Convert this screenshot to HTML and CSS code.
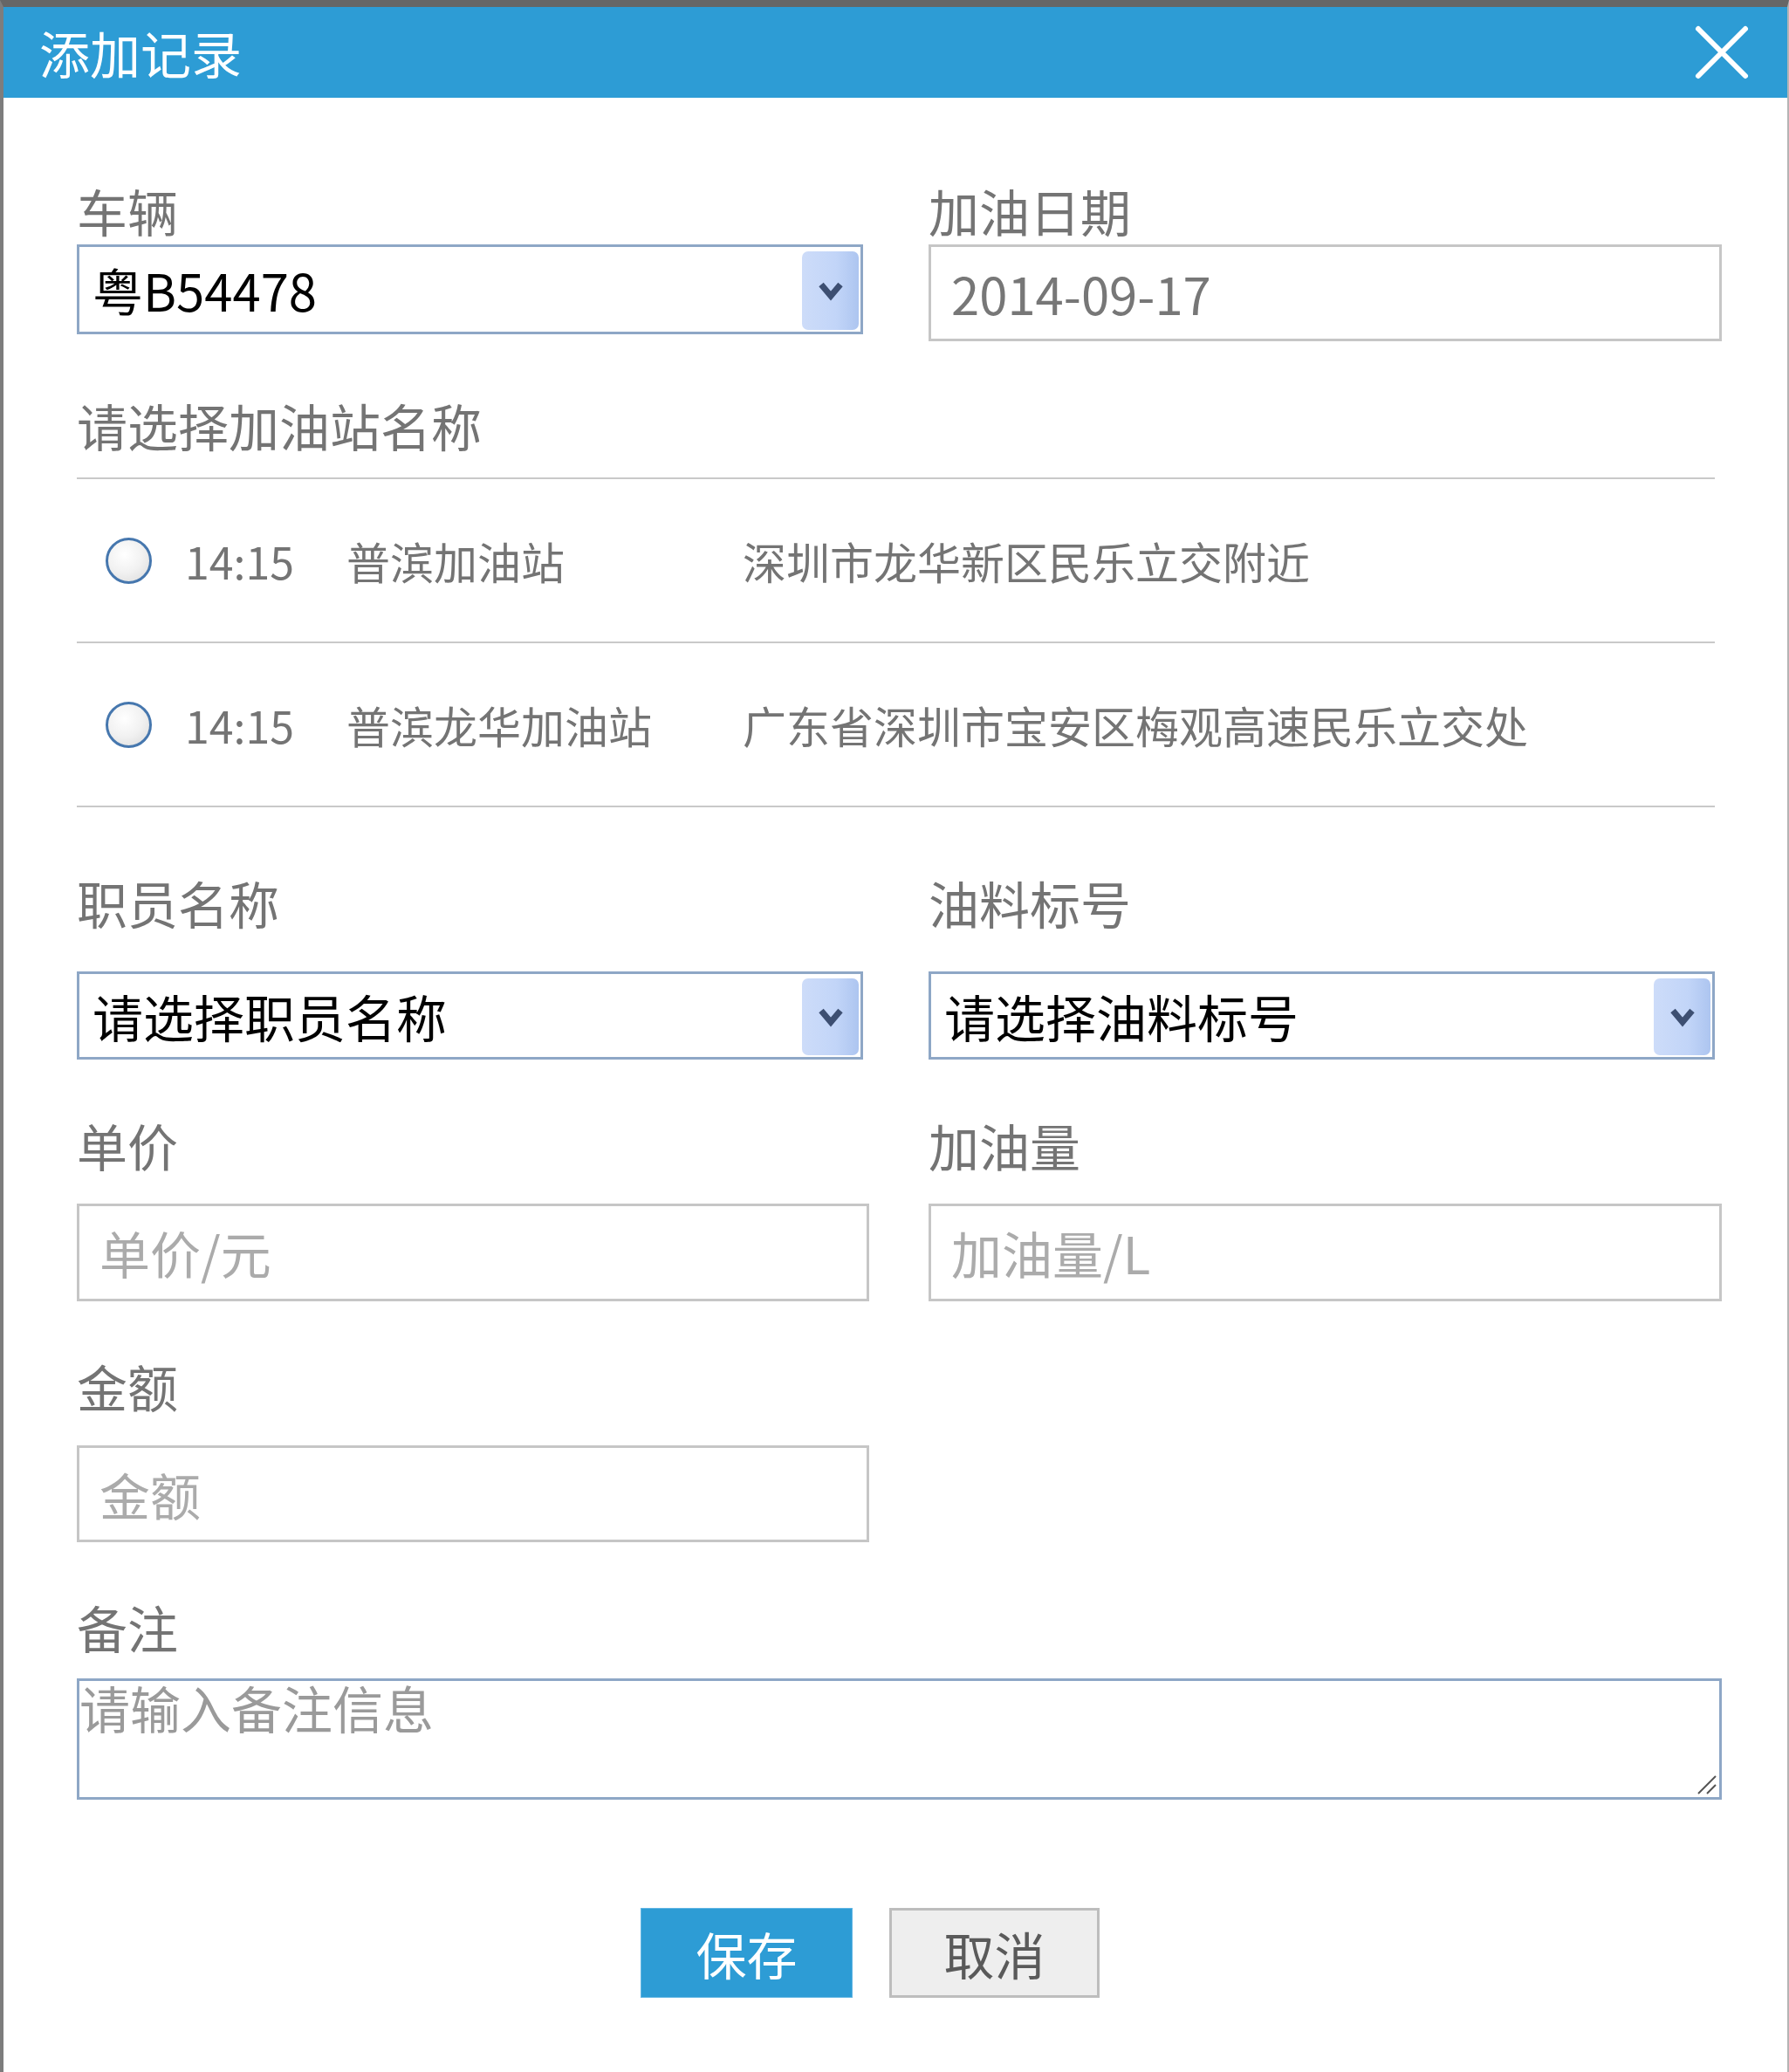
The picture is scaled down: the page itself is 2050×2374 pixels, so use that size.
FILE: index.html
```html
<!DOCTYPE html>
<html lang="zh-CN">
<head>
<meta charset="utf-8">
<title>添加记录</title>
<link rel="stylesheet" href="styles.css">
</head>
<body>
<div class="dialog">
  <div class="header">
    <div class="title">添加记录</div>
    <svg class="close" width="66" height="66" viewBox="0 0 66 66"><path d="M6 6 L60 60 M60 6 L6 60" stroke="#fff" stroke-width="6" stroke-linecap="round" fill="none"/></svg>
  </div>
  <div class="body">
    <div class="grid first">
      <div class="field">
        <div class="label">车辆</div>
        <div class="select">
          <span class="sel-text">粤B54478</span>
          <span class="drop"><svg width="32" height="26" viewBox="0 0 32 26"><path d="M5 6 L16 19 L27 6" stroke="#3d4f72" stroke-width="7" fill="none"/></svg></span>
        </div>
      </div>
      <div class="field">
        <div class="label">加油日期</div>
        <input class="input date" type="text" value="2014-09-17">
      </div>
    </div>

    <div class="label section">请选择加油站名称</div>
    <div class="stations">
      <div class="station">
        <span class="radio"></span>
        <span class="time">14:15</span>
        <span class="name">普滨加油站</span>
        <span class="addr">深圳市龙华新区民乐立交附近</span>
      </div>
      <div class="station">
        <span class="radio"></span>
        <span class="time">14:15</span>
        <span class="name">普滨龙华加油站</span>
        <span class="addr">广东省深圳市宝安区梅观高速民乐立交处</span>
      </div>
    </div>

    <div class="grid second">
      <div class="field">
        <div class="label">职员名称</div>
        <div class="select gap47">
          <span class="sel-text">请选择职员名称</span>
          <span class="drop"><svg width="32" height="26" viewBox="0 0 32 26"><path d="M5 6 L16 19 L27 6" stroke="#3d4f72" stroke-width="7" fill="none"/></svg></span>
        </div>
      </div>
      <div class="field">
        <div class="label">油料标号</div>
        <div class="select gap47">
          <span class="sel-text">请选择油料标号</span>
          <span class="drop"><svg width="32" height="26" viewBox="0 0 32 26"><path d="M5 6 L16 19 L27 6" stroke="#3d4f72" stroke-width="7" fill="none"/></svg></span>
        </div>
      </div>
    </div>

    <div class="grid third">
      <div class="field">
        <div class="label">单价</div>
        <input class="input gap35" type="text" placeholder="单价/元">
      </div>
      <div class="field">
        <div class="label">加油量</div>
        <input class="input gap35" type="text" placeholder="加油量/L">
      </div>
    </div>

    <div class="grid fourth">
      <div class="field">
        <div class="label">金额</div>
        <input class="input gap36" type="text" placeholder="金额">
      </div>
    </div>

    <div class="field fifth">
      <div class="label">备注</div>
      <div class="ta-wrap">
        <textarea class="textarea" placeholder="请输入备注信息"></textarea>
        <svg class="grip" width="28" height="28" viewBox="0 0 28 28"><path d="M26 6 L6 26 M26 16 L16 26" stroke="#555" stroke-width="2" fill="none"/></svg>
      </div>
    </div>

    <div class="buttons">
      <button class="btn save">保存</button>
      <button class="btn cancel">取消</button>
    </div>
  </div>
</div>
</body>
</html>
```
FILE: styles.css
```css
html, body {
  margin: 0;
  padding: 0;
  background: #fff;
}
body {
  font-family: "Noto Sans CJK SC", "Noto Sans", sans-serif;
}
.dialog {
  border-top: 8px solid #666;
  border-left: 4px solid #7d7d7d;
  border-right: 2px solid #b4b4b4;
  height: 2366px;
  background: #fff;
}
.header {
  height: 104px;
  background: #2d9cd5;
  display: flex;
  align-items: center;
  justify-content: space-between;
  padding: 0 42px 0 41px;
}
.title {
  color: #fff;
  font-size: 58px;
  line-height: 58px;
}
.close {
  display: block;
}
.body {
  padding: 97px 75px 0 84px;
}
.grid {
  display: grid;
  grid-template-columns: 908px 909px;
  column-gap: 68px;
}
.field {
  display: flex;
  flex-direction: column;
}
.label {
  font-size: 58px;
  line-height: 64px;
  height: 64px;
  color: #747474;
  white-space: nowrap;
}
.select {
  position: relative;
  box-sizing: border-box;
  width: 901px;
  height: 103px;
  margin-top: 7px;
  border: 3px solid #8ea7c6;
  display: flex;
  align-items: center;
  padding-left: 15px;
  background: #fff;
}
.select.gap47 {
  margin-top: 47px;
  height: 101px;
}
.sel-text {
  font-size: 58px;
  line-height: 64px;
  color: #000;
}
.drop {
  position: absolute;
  top: 5px;
  bottom: 2px;
  right: 2px;
  width: 65px;
  border-radius: 7px;
  background: linear-gradient(90deg, #cddcf9 0%, #c2d5f8 60%, #adc5f0 100%);
  display: flex;
  align-items: center;
  justify-content: center;
}
.drop svg {
  display: block;
}
.input {
  box-sizing: border-box;
  width: 100%;
  height: 111px;
  margin-top: 7px;
  border: 3px solid #c6c6c6;
  padding: 0 0 0 23px;
  font-family: inherit;
  font-size: 58px;
  color: #777;
  background: #fff;
  outline: none;
}
.input::placeholder {
  color: #ababab;
}
.input.gap35 {
  margin-top: 35px;
  height: 112px;
}
.input.gap36 {
  margin-top: 36px;
}
.section {
  margin-top: 64px;
}
.stations {
  margin-top: 28px;
  width: 1877px;
  border-top: 2px solid #c9c9c9;
}
.station {
  height: 186px;
  border-bottom: 2px solid #c9c9c9;
  display: grid;
  grid-template-columns: 53px 223px 454px auto;
  column-gap: 0;
  align-items: center;
  padding-left: 33px;
  font-size: 50px;
  color: #747474;
  white-space: nowrap;
}
.radio {
  box-sizing: border-box;
  width: 53px;
  height: 53px;
  border-radius: 50%;
  border: 3px solid #4677ae;
  background: radial-gradient(circle at 40% 35%, #ffffff 0%, #f1f1f1 50%, #d9d9d9 100%);
}
.time {
  padding-left: 38px;
}
.second {
  margin-top: 77px;
}
.third {
  margin-top: 66px;
}
.fourth {
  margin-top: 65px;
}
.fifth {
  margin-top: 65px;
}
.ta-wrap {
  position: relative;
  margin-top: 27px;
  width: 1885px;
  height: 139px;
}
.textarea {
  box-sizing: border-box;
  display: block;
  width: 1885px;
  height: 139px;
  border: 3px solid #8ea7c6;
  padding: 0;
  margin: 0;
  resize: none;
  outline: none;
  font-family: inherit;
  font-size: 58px;
  line-height: 60px;
  color: #333;
}
.textarea::placeholder {
  color: #9a9a9a;
}
.grip {
  position: absolute;
  right: 5px;
  bottom: 5px;
}
.buttons {
  margin-top: 124px;
  display: flex;
  gap: 42px;
  padding-left: 646px;
}
.btn {
  box-sizing: border-box;
  height: 103px;
  font-family: inherit;
  font-size: 58px;
  line-height: 1;
  padding: 0;
  cursor: pointer;
}
.save {
  width: 243px;
  background: #2d9cd5;
  border: 1px solid #62b6e4;
  color: #fff;
}
.cancel {
  width: 241px;
  background: #eeeeee;
  border: 3px solid #bdbdbd;
  color: #5a5a5a;
}
```
